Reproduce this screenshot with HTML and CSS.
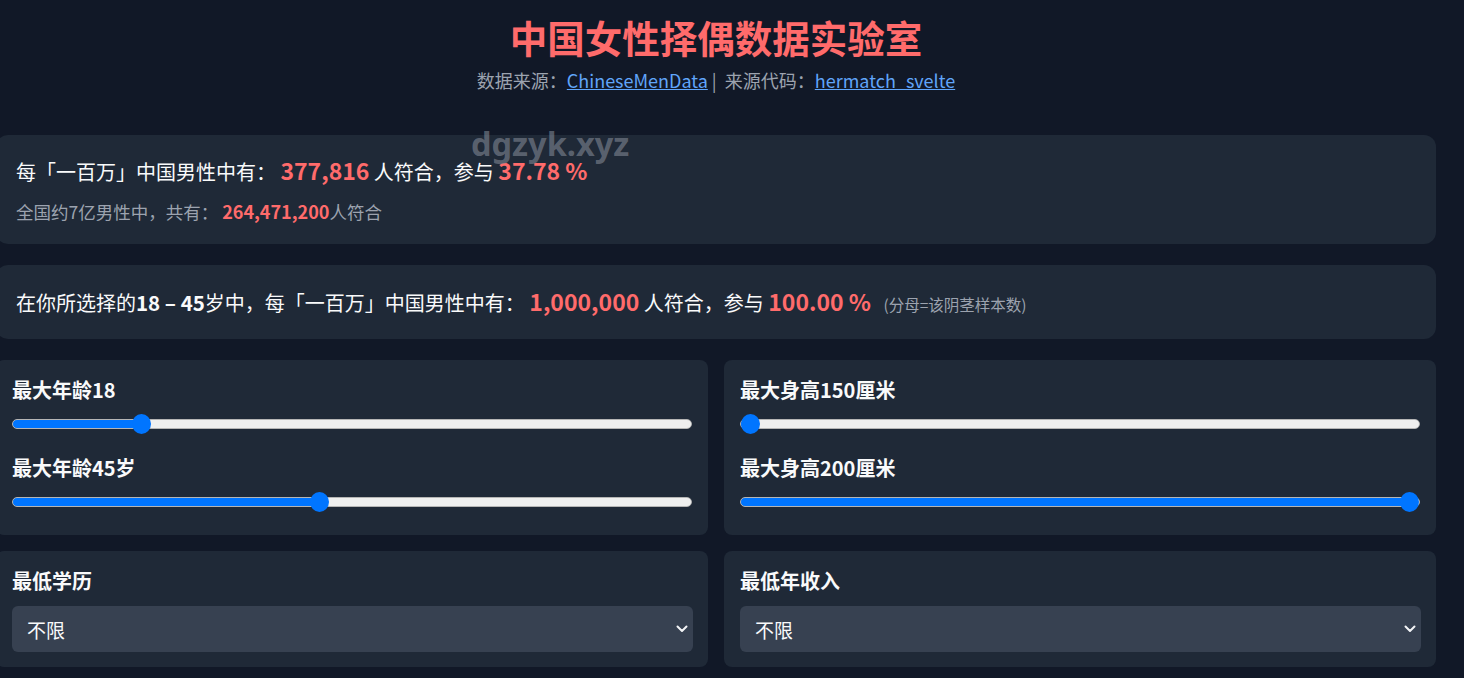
FILE: index.html
```html
<!DOCTYPE html>
<html lang="zh-CN">
<head>
<meta charset="utf-8">
<title>中国女性择偶数据实验室</title>
<link rel="stylesheet" href="styles.css">
</head>
<body>
<div class="page">
  <header class="header">
    <h1 class="title">中国女性择偶数据实验室</h1>
    <p class="source">数据来源：<a class="link" href="#">ChineseMenData</a> | &nbsp;来源代码：<a class="link" href="#">hermatch_svelte</a></p>
  </header>

  <div class="watermark">dgzyk.xyz</div>

  <section class="card summary">
    <p class="line-main">每「一百万」中国男性中有： <span class="num">377,816</span> 人符合，参与 <span class="num">37.78 %</span></p>
    <p class="line-sub">全国约7亿男性中，共有： <span class="num-sm">264,471,200</span>人符合</p>
  </section>

  <section class="card summary2">
    <p class="line-main">在你所选择的<b>18 – 45</b>岁中，每「一百万」中国男性中有： <span class="num">1,000,000</span> 人符合，参与 <span class="num">100.00 %</span> <span class="note">(分母=该阴茎样本数)</span></p>
  </section>

  <div class="grid">
    <section class="card panel">
      <div class="field">
        <label class="label">最大年龄18</label>
        <input class="range" type="range" min="0" max="100" value="18" style="--v:0.18">
      </div>
      <div class="field">
        <label class="label">最大年龄45岁</label>
        <input class="range" type="range" min="0" max="100" value="45" style="--v:0.45">
      </div>
    </section>
    <section class="card panel">
      <div class="field">
        <label class="label">最大身高150厘米</label>
        <input class="range" type="range" min="150" max="200" value="150" style="--v:0">
      </div>
      <div class="field">
        <label class="label">最大身高200厘米</label>
        <input class="range" type="range" min="150" max="200" value="200" style="--v:1">
      </div>
    </section>
    <section class="card panel-select">
      <label class="label">最低学历</label>
      <div class="select-wrap">
        <select class="select"><option>不限</option></select>
        <svg class="chevron" width="12" height="8" viewBox="0 0 12 8"><path d="M1.5 1.5 L6 6 L10.5 1.5" fill="none" stroke="#f3f4f6" stroke-width="2" stroke-linecap="round" stroke-linejoin="round"/></svg>
      </div>
    </section>
    <section class="card panel-select">
      <label class="label">最低年收入</label>
      <div class="select-wrap">
        <select class="select"><option>不限</option></select>
        <svg class="chevron" width="12" height="8" viewBox="0 0 12 8"><path d="M1.5 1.5 L6 6 L10.5 1.5" fill="none" stroke="#f3f4f6" stroke-width="2" stroke-linecap="round" stroke-linejoin="round"/></svg>
      </div>
    </section>
  </div>
</div>
</body>
</html>
```

FILE: styles.css
```css
html, body {
  margin: 0;
  padding: 0;
  background: #111827;
  overflow: hidden;
}
body {
  font-family: "Noto Sans CJK SC", "Noto Sans", sans-serif;
  color: #f3f4f6;
}
.page {
  position: relative;
  width: 1440px;
  margin-left: -4px;
}
.header {
  text-align: center;
}
.title {
  margin: 10px 0 0;
  font-size: 37.5px;
  line-height: 54px;
  font-weight: 700;
  color: #ff6b6b;
}
.source {
  margin: 3px 0 0;
  font-size: 18px;
  line-height: 26px;
  color: #9ca3af;
}
.link {
  color: #60a5fa;
  text-decoration: underline;
}
.watermark {
  position: absolute;
  left: 475px;
  top: 117px;
  font-family: "Noto Sans", sans-serif;
  font-weight: 700;
  font-size: 32.5px;
  line-height: 34px;
  color: rgba(128, 134, 146, 0.62);
  z-index: 2;
  pointer-events: none;
}
.card {
  background: #1f2937;
  border-radius: 12px;
  box-sizing: border-box;
}
.summary {
  margin-top: 42px;
  height: 109px;
  padding: 19px 20px 0;
}
.summary2 {
  margin-top: 21px;
  height: 74px;
  padding: 20px;
}
.summary p, .summary2 p {
  margin: 0;
}
.line-main {
  font-size: 20px;
  line-height: 36px;
  color: #f9fafb;
}
.summary2 .line-main {
  line-height: 34px;
}
.line-main b {
  font-weight: 700;
  font-size: 20.5px;
}
.num {
  font-size: 23px;
  line-height: 1;
  font-weight: 700;
  color: #ff6b6b;
}
.line-sub {
  margin-top: 9px !important;
  font-size: 17.5px;
  line-height: 26px;
  color: #9ca3af;
}
.num-sm {
  font-size: 18px;
  line-height: 1;
  font-weight: 700;
  color: #ff6b6b;
}
.note {
  font-size: 15.5px;
  line-height: 1;
  color: #9ca3af;
  margin-left: 8px;
}
.grid {
  margin-top: 21px;
  display: grid;
  grid-template-columns: 1fr 1fr;
  gap: 16px;
}
.panel {
  border-radius: 8px;
  padding: 16px 16px 23px;
  display: flex;
  flex-direction: column;
  gap: 20px;
}
.field {
  display: flex;
  flex-direction: column;
}
.label {
  display: block;
  font-size: 20px;
  line-height: 28px;
  font-weight: 700;
  color: #f9fafb;
  margin-bottom: 10px;
}
.range {
  -webkit-appearance: none;
  appearance: none;
  display: block;
  width: 100%;
  height: 20px;
  margin: 0;
  background: transparent;
  cursor: pointer;
}
.range::-webkit-slider-runnable-track {
  height: 10px;
  border-radius: 5px;
  box-sizing: border-box;
  border: 1px solid #b5b5b5;
  background: linear-gradient(to right,
    #0075ff 0,
    #0075ff calc(9px + (100% - 18px) * var(--v)),
    #efefef calc(9px + (100% - 18px) * var(--v)),
    #efefef 100%);
}
.range::-webkit-slider-thumb {
  -webkit-appearance: none;
  appearance: none;
  width: 19px;
  height: 20px;
  margin-top: -6px;
  border-radius: 50%;
  background: #0075ff;
  border: none;
}
.panel-select {
  border-radius: 8px;
  padding: 16px 15px 15px 16px;
}
.panel-select .label {
  margin-bottom: 11px;
}
.select-wrap {
  position: relative;
}
.select {
  -webkit-appearance: none;
  appearance: none;
  display: block;
  width: 100%;
  height: 46px;
  border: none;
  border-radius: 6px;
  background: #374151;
  color: #f9fafb;
  font-family: "Noto Sans CJK SC", sans-serif;
  font-size: 19px;
  padding: 0 15px;
  outline: none;
}
.chevron {
  position: absolute;
  right: 5px;
  top: 19px;
  pointer-events: none;
}
```
